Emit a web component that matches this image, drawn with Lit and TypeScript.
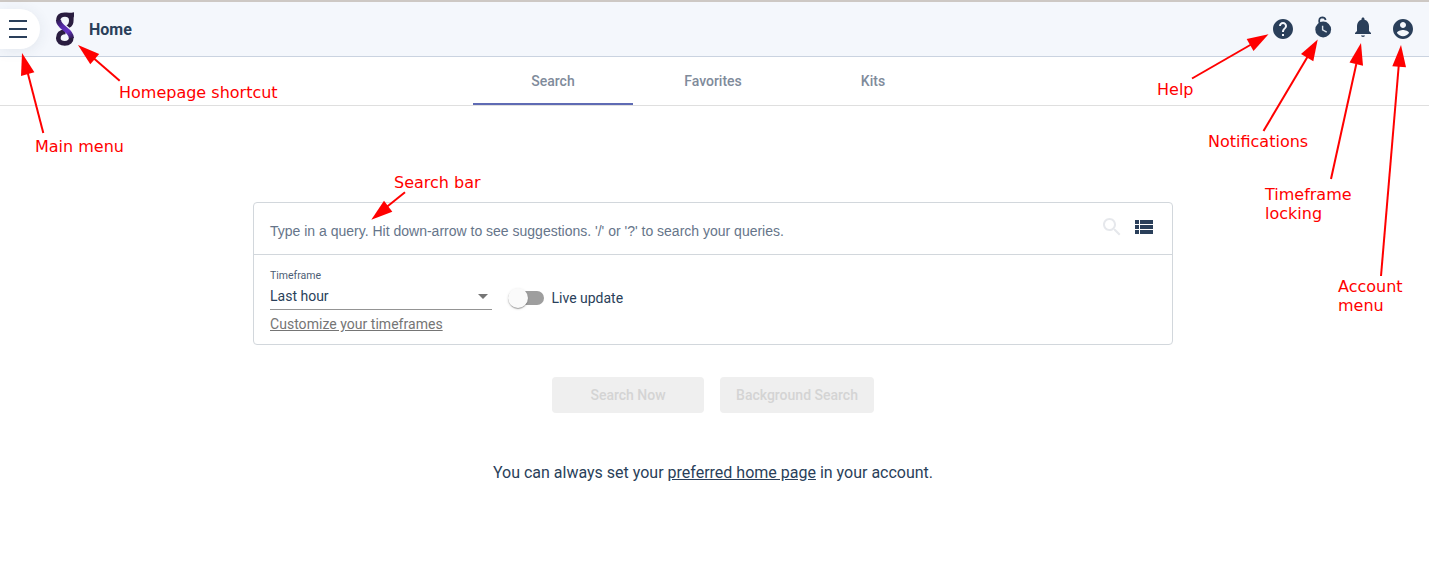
import { LitElement, html, css, svg } from "lit";
import { customElement } from "lit/decorators.js";

const ARROWS = [
  { line: [119.7, 80.7, 94, 58.5], head: "78,45 99.2,54 90.3,64.3" },
  { line: [43.3, 133, 27.5, 72], head: "22,53 34.4,72.2 21,76" },
  { line: [405, 192.3, 386, 207.5], head: "371.3,219.8 384,200.8 392.3,211.7" },
  { line: [1192, 78.5, 1252, 44], head: "1268.5,34.3 1246.7,39 1253.5,51" },
  { line: [1263.5, 131, 1308, 56], head: "1317.7,39.5 1301,54 1313.3,61.2" },
  { line: [1331, 179, 1356.3, 64], head: "1361,43 1349.5,62.5 1363,65.8" },
  { line: [1381, 276, 1398.7, 66], head: "1401,45 1392.3,66.2 1406,67.3" },
];

const LABELS = [
  { x: 119, y: 98, lines: ["Homepage shortcut"] },
  { x: 35, y: 152, lines: ["Main menu"] },
  { x: 394, y: 188, lines: ["Search bar"] },
  { x: 1157, y: 95, lines: ["Help"] },
  { x: 1208, y: 147, lines: ["Notifications"] },
  { x: 1265, y: 200, lines: ["Timeframe", "locking"] },
  { x: 1338, y: 292, lines: ["Account", "menu"] },
];

@customElement("app-root")
export class AppRoot extends LitElement {
  static styles = css`
    :host {
      display: block;
      position: relative;
      height: 576px;
      overflow: hidden;
      background: #fff;
      color: #2a3f5a;
      font: 14px/20px Roboto, sans-serif;
    }
    * { box-sizing: border-box; }
    svg { display: block; }
    header {
      height: 57px;
      display: flex;
      align-items: center;
      border-top: 2px solid #cdc8c4;
      border-bottom: 1px solid #cad3e0;
      background: #f4f7fc;
    }
    .menu {
      width: 40px;
      height: 40px;
      padding: 9px 0 0 6px;
      background: #fff;
      border-radius: 0 20px 20px 0;
      box-shadow: 0 2px 14px rgba(42, 63, 90, 0.09);
    }
    .logo { margin: 0 0 1px 13px; }
    .home { margin: 0 auto 0 10px; padding-top: 2px; font-size: 16px; font-weight: 700; }
    .actions { display: flex; gap: 16px; padding-right: 14px; }
    nav {
      height: 49px;
      display: flex;
      justify-content: center;
      padding-right: 3px;
      border-bottom: 1px solid #dfdfdf;
    }
    .tab {
      width: 160px;
      text-align: center;
      line-height: 49px;
      font-weight: 500;
      color: #7f8b9b;
    }
    .tab.active { border-bottom: 2px solid #5f6bb4; }
    main { width: 920px; margin: 96px auto 0 253px; }
    .card { height: 143px; border: 1px solid #d2d7dc; border-radius: 4px; }
    .query {
      height: 52px;
      display: flex;
      align-items: center;
      padding: 0 16px;
      border-bottom: 1px solid #d2d7dc;
    }
    .hint {
      flex: 1;
      padding-top: 5px;
      font-family: "Liberation Sans", Arial, sans-serif;
      color: #66758a;
    }
    .tools { display: flex; gap: 8px; padding-bottom: 4px; }
    .options { display: flex; gap: 16px; padding: 13px 16px 0; }
    .field { width: 222px; }
    .caption { font-size: 10.5px; line-height: 16px; color: #4c5d74; }
    .select {
      height: 26px;
      display: flex;
      align-items: center;
      justify-content: space-between;
      padding-right: 4px;
      border-bottom: 1px solid #949494;
    }
    .value { padding-bottom: 2px; }
    .caret { border: 5px solid transparent; border-top-color: #757575; border-bottom: 0; }
    .customize { margin-top: 4px; color: #757575; text-decoration: underline; letter-spacing: 0.03px; }
    .live { display: flex; align-items: center; height: 20px; gap: 7.5px; margin-top: 20px; }
    .track {
      width: 36px;
      height: 14px;
      display: flex;
      align-items: center;
      border-radius: 7px;
      background: #9e9e9e;
    }
    .knob {
      width: 20px;
      height: 20px;
      flex: none;
      border-radius: 50%;
      background: #fafafa;
      box-shadow: 0 2px 1px -1px rgba(0,0,0,.2), 0 1px 1px rgba(0,0,0,.14), 0 1px 3px rgba(0,0,0,.12);
    }
    .buttons { display: flex; justify-content: center; gap: 16px; margin-top: 32px; }
    .button {
      height: 36px;
      width: 152px;
      border-radius: 4px;
      background: #efefef;
      color: #d4d4d4;
      font-weight: 500;
      line-height: 36px;
      text-align: center;
    }
    .button.wide { width: 154px; }
    .note { margin-top: 49px; font-size: 16px; line-height: 22px; text-align: center; }
    .note a { text-decoration: underline; }
    .annotations { position: absolute; inset: 0; pointer-events: none; }
    .annotations text { font: 16px "DejaVu Sans", sans-serif; fill: #f00; }
  `;

  private icon(path: string) {
    return html`<svg width="24" height="24" viewBox="0 0 24 24" fill="#2a3f5a"><path d=${path}></path></svg>`;
  }

  render() {
    return html`
      <header>
        <div class="menu">
          <svg width="24" height="24" viewBox="0 0 24 24" stroke="#2a3f5a" stroke-width="2">
            <path d="M3 3H21M3 11H21M3 19H21"></path>
          </svg>
        </div>
        <svg class="logo" width="26" height="36" viewBox="0 0 26 36" fill="none">
          <defs>
            <linearGradient id="band" x1="5" y1="8" x2="19" y2="28" gradientUnits="userSpaceOnUse">
              <stop offset="0" stop-color="#2b1a48"></stop>
              <stop offset=".35" stop-color="#5428a8"></stop>
              <stop offset=".65" stop-color="#6633c4"></stop>
              <stop offset="1" stop-color="#2b1a48"></stop>
            </linearGradient>
          </defs>
          <path d="M21 1.200V5.500C20.700 6 20.600 7 20.600 9C20.600 13 19.400 15.400 16.500 16.800L13.500 14.300C15.500 13.300 16 11.500 16 9C16 6.500 14.200 5.800 12 5.800C9 5.800 7.400 7.300 7.400 9.500H3.200C3.200 4.500 6 1.600 11.500 1.600C14 1.600 18 2 21 1.200Z" fill="#2a1d40"></path>
          <path d="M12.500 20.800C7.500 20.800 5.300 23.500 5.300 27.300C5.300 30.500 8 32.300 11.800 32.300C16 32.300 18.300 30 18.300 26.500" stroke="#2a1d40" stroke-width="4.700"></path>
          <path d="M5.500 9C5.500 17 18.400 18.500 18.400 27" stroke="url(#band)" stroke-width="5.200"></path>
        </svg>
        <div class="home">Home</div>
        <div class="actions">
          ${this.icon("M12 2C6.48 2 2 6.48 2 12s4.48 10 10 10 10-4.48 10-10S17.52 2 12 2zm1 17h-2v-2h2v2zm2.07-7.75l-.9.92C13.45 12.9 13 13.5 13 15h-2v-.5c0-1.1.45-2.1 1.17-2.83l1.24-1.26c.37-.36.59-.86.59-1.41 0-1.1-.9-2-2-2s-2 .9-2 2H8c0-2.21 1.79-4 4-4s4 1.79 4 4c0 .88-.36 1.68-.93 2.25z")}
          <svg width="24" height="24" viewBox="0 0 24 24" fill="none" overflow="visible">
            <circle cx="12.200" cy="12.500" r="7.900" fill="#2a3f5a"></circle>
            <path d="M8.600 6.500C7.500 2.500 8.600 .4 11.300 .3C13.200 .3 14.200 1.300 14.700 3" stroke="#2a3f5a" stroke-width="1.700"></path>
            <path d="M11.600 8.700V12.900L15.700 15.200" stroke="#dce3eb" stroke-width="1.400"></path>
          </svg>
          ${this.icon("M12 20c1.1 0 2-.8 2-1.5h-4c0 .7.9 1.5 2 1.5zm6-6V9c0-3.07-1.64-5.64-4.5-6.32V2c0-.83-.67-1.5-1.5-1.5S10.500 1.170 10.500 2v.68C7.630 3.360 6 5.920 6 9v5l-2 2v1h16v-1l-2-2z")}
          ${this.icon("M12 2C6.48 2 2 6.48 2 12s4.48 10 10 10 10-4.48 10-10S17.52 2 12 2zm0 3c1.66 0 3 1.34 3 3s-1.34 3-3 3-3-1.34-3-3 1.34-3 3-3zm0 14.200c-2.500 0-4.710-1.280-6-3.220.030-1.990 4-3.080 6-3.080 1.990 0 5.970 1.090 6 3.080-1.290 1.940-3.500 3.220-6 3.220z")}
        </div>
      </header>
      <nav>
        <div class="tab active">Search</div>
        <div class="tab">Favorites</div>
        <div class="tab">Kits</div>
      </nav>
      <main>
        <section class="card">
          <div class="query">
            <div class="hint">Type in a query. Hit down-arrow to see suggestions. '/' or '?' to search your queries.</div>
            <div class="tools">
              <svg width="24" height="24" viewBox="0 0 24 24" fill="#e6e8ec"><path d="M15.500 14h-.79l-.28-.27C15.410 12.590 16 11.110 16 9.500 16 5.910 13.090 3 9.500 3S3 5.910 3 9.500 5.910 16 9.500 16c1.610 0 3.090-.59 4.230-1.570l.27.28v.79l5 4.990L20.490 19l-4.990-5zm-6 0C7.010 14 5 11.990 5 9.500S7.010 5 9.500 5 14 7.010 14 9.500 11.990 14 9.500 14z"></path></svg>
              ${this.icon("M3 14h4v-4H3v4zm0 5h4v-4H3v4zM3 9h4V5H3v4zm5 5h13v-4H8v4zm0 5h13v-4H8v4zM8 5v4h13V5H8z")}
            </div>
          </div>
          <div class="options">
            <div class="field">
              <div class="caption">Timeframe</div>
              <div class="select"><span class="value">Last hour</span><span class="caret"></span></div>
              <div class="customize">Customize your timeframes</div>
            </div>
            <div class="live"><div class="track"><div class="knob"></div></div><span>Live update</span></div>
          </div>
        </section>
        <div class="buttons">
          <div class="button">Search Now</div>
          <div class="button wide">Background Search</div>
        </div>
        <div class="note">You can always set your <a>preferred home page</a> in your account.</div>
      </main>
      <svg class="annotations" width="1429" height="576" viewBox="0 0 1429 576">
        ${ARROWS.map(({ line: [x1, y1, x2, y2], head }) => svg`
          <line x1=${x1} y1=${y1} x2=${x2} y2=${y2} stroke="#f00" stroke-width="2"></line>
          <polygon points=${head} fill="#f00"></polygon>`)}
        ${LABELS.map((label) => label.lines.map((line, i) => svg`
          <text x=${label.x} y=${label.y + i * 19}>${line}</text>`))}
      </svg>
    `;
  }
}
